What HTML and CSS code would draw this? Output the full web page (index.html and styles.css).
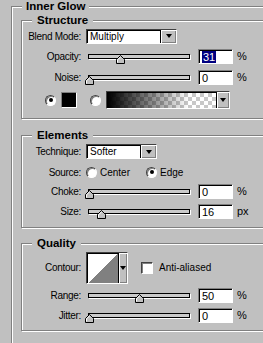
FILE: index.html
```html
<!doctype html>
<html lang="en">
<head>
    <meta charset="UTF-8">
    <title>Inner Glow</title>
    <link rel="stylesheet" href="styles.css">
</head>
<body>
<!-- outer group -->
<fieldset class="group">
    <legend>Inner Glow</legend>

    <!-- Structure -->
    <fieldset class="box structure">
        <legend>Structure</legend>
        <div class="row row-blend">
            <span class="label">Blend Mode:</span>
            <div class="select blend"><span class="value">Multiply</span><span class="drop"></span></div>
        </div>
        <div class="row row-opacity">
            <span class="label">Opacity:</span>
            <div class="slider">
                <span class="thumb" style="left: 31%"><svg width="9" height="9" viewBox="0 0 9 9"><polygon points="4.5,0.5 8.5,4.5 8.5,8.5 0.5,8.5 0.5,4.5" fill="#c0c0c0" stroke="#000"/><polyline points="1.5,7.5 1.5,4.9 4.5,1.9" fill="none" stroke="#fff"/></svg></span>
            </div>
            <div class="field"><span class="sel">31</span></div>
            <span class="unit">%</span>
        </div>
        <div class="row row-noise">
            <span class="label">Noise:</span>
            <div class="slider">
                <span class="thumb" style="left: 0%"><svg width="9" height="9" viewBox="0 0 9 9"><polygon points="4.5,0.5 8.5,4.5 8.5,8.5 0.5,8.5 0.5,4.5" fill="#c0c0c0" stroke="#000"/><polyline points="1.5,7.5 1.5,4.9 4.5,1.9" fill="none" stroke="#fff"/></svg></span>
            </div>
            <div class="field">0</div>
            <span class="unit">%</span>
        </div>
        <div class="row row-color">
            <span class="radio checked"></span>
            <span class="swatch"></span>
            <span class="radio radio-grad"></span>
            <div class="gradient"><span class="grad-fill"></span><span class="drop"></span></div>
        </div>
    </fieldset>

    <!-- Elements -->
    <fieldset class="box elements">
        <legend>Elements</legend>
        <div class="row row-tech">
            <span class="label">Technique:</span>
            <div class="select technique"><span class="value">Softer</span><span class="drop"></span></div>
        </div>
        <div class="row row-source">
            <span class="label">Source:</span>
            <span class="option option-center"><span class="radio"></span>Center</span>
            <span class="option"><span class="radio checked"></span>Edge</span>
        </div>
        <div class="row row-choke">
            <span class="label">Choke:</span>
            <div class="slider">
                <span class="thumb" style="left: 0%"><svg width="9" height="9" viewBox="0 0 9 9"><polygon points="4.5,0.5 8.5,4.5 8.5,8.5 0.5,8.5 0.5,4.5" fill="#c0c0c0" stroke="#000"/><polyline points="1.5,7.5 1.5,4.9 4.5,1.9" fill="none" stroke="#fff"/></svg></span>
            </div>
            <div class="field">0</div>
            <span class="unit">%</span>
        </div>
        <div class="row row-size">
            <span class="label">Size:</span>
            <div class="slider">
                <span class="thumb" style="left: 12%"><svg width="9" height="9" viewBox="0 0 9 9"><polygon points="4.5,0.5 8.5,4.5 8.5,8.5 0.5,8.5 0.5,4.5" fill="#c0c0c0" stroke="#000"/><polyline points="1.5,7.5 1.5,4.9 4.5,1.9" fill="none" stroke="#fff"/></svg></span>
            </div>
            <div class="field">16</div>
            <span class="unit">px</span>
        </div>
    </fieldset>

    <!-- Quality -->
    <fieldset class="box quality">
        <legend>Quality</legend>
        <div class="row row-contour">
            <span class="label">Contour:</span>
            <div class="contour"><span class="curve"></span><span class="drop"></span></div>
            <span class="check"></span>
            <span class="check-label">Anti-aliased</span>
        </div>
        <div class="row row-range">
            <span class="label">Range:</span>
            <div class="slider">
                <span class="thumb" style="left: 50%"><svg width="9" height="9" viewBox="0 0 9 9"><polygon points="4.5,0.5 8.5,4.5 8.5,8.5 0.5,8.5 0.5,4.5" fill="#c0c0c0" stroke="#000"/><polyline points="1.5,7.5 1.5,4.9 4.5,1.9" fill="none" stroke="#fff"/></svg></span>
            </div>
            <div class="field">50</div>
            <span class="unit">%</span>
        </div>
        <div class="row row-jitter">
            <span class="label">Jitter:</span>
            <div class="slider">
                <span class="thumb" style="left: 0%"><svg width="9" height="9" viewBox="0 0 9 9"><polygon points="4.5,0.5 8.5,4.5 8.5,8.5 0.5,8.5 0.5,4.5" fill="#c0c0c0" stroke="#000"/><polyline points="1.5,7.5 1.5,4.9 4.5,1.9" fill="none" stroke="#fff"/></svg></span>
            </div>
            <div class="field">0</div>
            <span class="unit">%</span>
        </div>
    </fieldset>
</fieldset>
</body>
</html>
```

FILE: styles.css
```css
* {
    box-sizing: border-box;
}

html,
body {
    margin: 0;
    overflow: hidden;
}

body {
    background: #c0c0c0;
    color: #000;
    font: 10px "Liberation Sans", Arial, sans-serif;
}

/* etched group boxes */
fieldset {
    margin: 0;
    min-width: 0;
    border: 1px solid #808080;
    box-shadow: inset 1px 1px 0 #fff, 1px 1px 0 #fff;
}

legend {
    font: bold 11.5px/12px "Liberation Sans", Arial, sans-serif;
    background: #c0c0c0;
}

.group {
    margin-left: 11px;
    width: 300px;
    padding: 2px 0 40px 9px;
}

.group > legend {
    margin-left: 1px;
    padding: 0 4px;
}

.box {
    padding: 0;
}

.box > legend {
    margin-left: 10px;
    padding: 0 5px;
}

.structure {
    padding-bottom: 6px;
}

.elements {
    margin-top: 10px;
    padding-bottom: 5px;
}

.quality {
    margin-top: 9px;
    padding-bottom: 4px;
}

/* rows */
.row {
    display: flex;
    align-items: center;
}

.row-blend { height: 20px; }
.row-opacity { height: 20px; }
.row-noise { height: 22px; }
.row-color { height: 24px; padding-left: 23px; }
.row-tech { height: 21px; }
.row-source { height: 20px; }
.row-choke { height: 18px; }
.row-size { height: 22px; }
.row-contour { height: 37px; }
.row-range { height: 18px; }
.row-jitter { height: 22px; }

.label {
    width: 59px;
    margin-right: 5px;
    text-align: right;
    white-space: nowrap;
    letter-spacing: -0.3px;
}

/* popup menus */
.select {
    display: flex;
    height: 15px;
    background: #fff;
    border: 1px solid;
    border-color: #404040 #fff #fff #404040;
    box-shadow: inset 1px 1px 0 #000;
}

.blend {
    width: 91px;
}

.technique {
    width: 71px;
}

.select .value {
    flex: 1;
    padding: 1px 0 0 3px;
    line-height: 12px;
}

.drop {
    position: relative;
    width: 16px;
    background: #c0c0c0;
    border-left: 1px solid #000;
    box-shadow: inset 1px 1px 0 #fff, inset -1px -1px 0 #808080;
}

.drop:after {
    content: "";
    position: absolute;
    left: 50%;
    top: 50%;
    margin: -2px 0 0 -3px;
    border-left: 3.5px solid transparent;
    border-right: 3.5px solid transparent;
    border-top: 4px solid #000;
}

/* sliders */
.slider {
    position: relative;
    width: 102px;
    height: 5px;
    margin-left: 2px;
    background: #cacaca;
    border: 1px solid #000;
    box-shadow: 1px 1px 0 #fff;
}

.thumb {
    position: absolute;
    top: 0;
    margin-left: -4.5px;
    width: 9px;
    height: 9px;
}

.thumb svg {
    display: block;
}

/* text fields */
.field {
    width: 35px;
    height: 15px;
    margin-left: 8px;
    padding: 1px 0 0 3px;
    line-height: 12px;
    font-size: 11px;
    background: #fff;
    border: 1px solid;
    border-color: #808080 #fff #fff #808080;
    box-shadow: inset 1px 1px 0 #000;
}

.field .sel {
    background: #000080;
    color: #fff;
    padding: 0 1px;
}

.unit {
    margin-left: 4px;
    font-size: 11px;
}

/* radios and swatches */
.radio {
    display: inline-block;
    position: relative;
    width: 11px;
    height: 11px;
    border-radius: 50%;
    background: #fff;
    border: 1px solid;
    border-color: #404040 #fff #fff #404040;
    box-shadow: inset 1px 1px 0 #808080;
}

.radio.checked:after {
    content: "";
    position: absolute;
    left: 2.5px;
    top: 2.5px;
    width: 4px;
    height: 4px;
    border-radius: 50%;
    background: #000;
}

.swatch {
    width: 16px;
    height: 16px;
    margin-left: 5px;
    background: #000;
    border: 1px solid;
    border-color: #808080 #fff #fff #808080;
}

.radio-grad {
    margin-left: 13px;
}

.gradient {
    display: flex;
    width: 124px;
    height: 18px;
    margin-left: 5px;
    border: 1px solid;
    border-color: #404040 #fff #fff #404040;
    box-shadow: inset 1px 1px 0 #000;
}

.grad-fill {
    flex: 1;
    margin: 1px 0 0 1px;
    background:
        linear-gradient(to right, #000, rgba(0, 0, 0, 0) 75%),
        repeating-conic-gradient(#c8c8c8 0 25%, #fff 0 50%) 0 0 / 8px 8px;
}

.gradient .drop {
    width: 13px;
}

.option {
    display: flex;
    align-items: center;
}

.option .radio {
    margin-right: 3px;
}

.option-center {
    width: 60px;
}

/* contour picker */
.contour {
    display: flex;
    width: 42px;
    height: 32px;
    border: 1px solid;
    border-color: #404040 #fff #fff #404040;
    box-shadow: inset 1px 1px 0 #000;
}

.curve {
    width: 30px;
    margin: 1px 0 0 1px;
    background: linear-gradient(to top left, #808080 50%, #fff 50%);
}

.contour .drop {
    flex: 1;
}

.check {
    width: 12px;
    height: 12px;
    margin-left: 13px;
    background: #fff;
    border: 1px solid;
    border-color: #404040 #fff #fff #404040;
    box-shadow: inset 1px 1px 0 #808080;
}

.check-label {
    margin-left: 6px;
}
```
